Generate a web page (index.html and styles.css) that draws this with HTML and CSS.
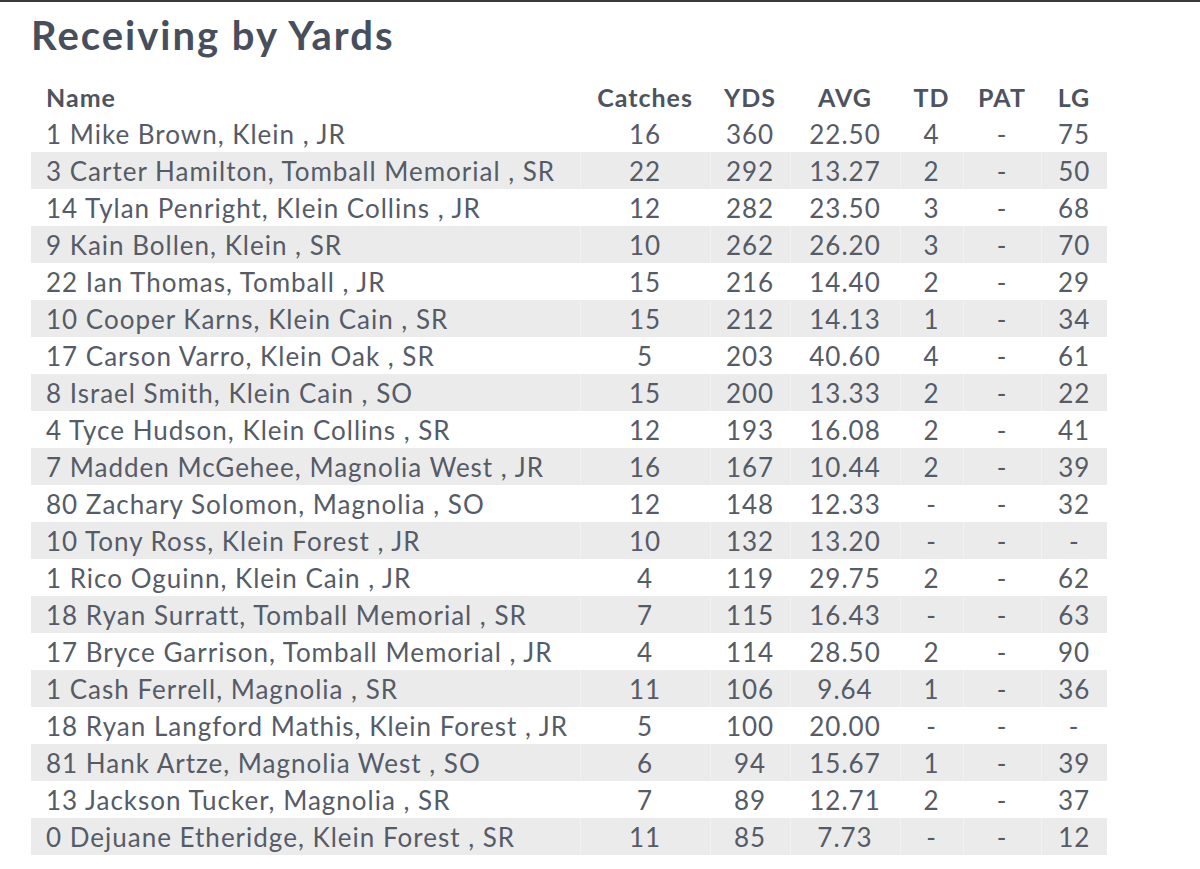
FILE: index.html
```html
<!DOCTYPE html>
<html>
<head>
<meta charset="utf-8">
<link rel="stylesheet" href="styles.css">
</head>
<body>
<div class="page">
  <h1 class="title">Receiving by Yards</h1>
  <table class="stats">
    <colgroup>
      <col class="c-name"><col class="c-catch"><col class="c-yds"><col class="c-avg"><col class="c-td"><col class="c-pat"><col class="c-lg">
    </colgroup>
    <thead>
      <tr><th class="name">Name</th><th>Catches</th><th>YDS</th><th>AVG</th><th>TD</th><th>PAT</th><th>LG</th></tr>
    </thead>
    <tbody>
      <tr><td class="name">1 Mike Brown, Klein , JR</td><td>16</td><td>360</td><td>22.50</td><td>4</td><td>-</td><td>75</td></tr>
      <tr><td class="name">3 Carter Hamilton, Tomball Memorial , SR</td><td>22</td><td>292</td><td>13.27</td><td>2</td><td>-</td><td>50</td></tr>
      <tr><td class="name">14 Tylan Penright, Klein Collins , JR</td><td>12</td><td>282</td><td>23.50</td><td>3</td><td>-</td><td>68</td></tr>
      <tr><td class="name">9 Kain Bollen, Klein , SR</td><td>10</td><td>262</td><td>26.20</td><td>3</td><td>-</td><td>70</td></tr>
      <tr><td class="name">22 Ian Thomas, Tomball , JR</td><td>15</td><td>216</td><td>14.40</td><td>2</td><td>-</td><td>29</td></tr>
      <tr><td class="name">10 Cooper Karns, Klein Cain , SR</td><td>15</td><td>212</td><td>14.13</td><td>1</td><td>-</td><td>34</td></tr>
      <tr><td class="name">17 Carson Varro, Klein Oak , SR</td><td>5</td><td>203</td><td>40.60</td><td>4</td><td>-</td><td>61</td></tr>
      <tr><td class="name">8 Israel Smith, Klein Cain , SO</td><td>15</td><td>200</td><td>13.33</td><td>2</td><td>-</td><td>22</td></tr>
      <tr><td class="name">4 Tyce Hudson, Klein Collins , SR</td><td>12</td><td>193</td><td>16.08</td><td>2</td><td>-</td><td>41</td></tr>
      <tr><td class="name">7 Madden McGehee, Magnolia West , JR</td><td>16</td><td>167</td><td>10.44</td><td>2</td><td>-</td><td>39</td></tr>
      <tr><td class="name">80 Zachary Solomon, Magnolia , SO</td><td>12</td><td>148</td><td>12.33</td><td>-</td><td>-</td><td>32</td></tr>
      <tr><td class="name">10 Tony Ross, Klein Forest , JR</td><td>10</td><td>132</td><td>13.20</td><td>-</td><td>-</td><td>-</td></tr>
      <tr><td class="name">1 Rico Oguinn, Klein Cain , JR</td><td>4</td><td>119</td><td>29.75</td><td>2</td><td>-</td><td>62</td></tr>
      <tr><td class="name">18 Ryan Surratt, Tomball Memorial , SR</td><td>7</td><td>115</td><td>16.43</td><td>-</td><td>-</td><td>63</td></tr>
      <tr><td class="name">17 Bryce Garrison, Tomball Memorial , JR</td><td>4</td><td>114</td><td>28.50</td><td>2</td><td>-</td><td>90</td></tr>
      <tr><td class="name">1 Cash Ferrell, Magnolia , SR</td><td>11</td><td>106</td><td>9.64</td><td>1</td><td>-</td><td>36</td></tr>
      <tr><td class="name">18 Ryan Langford Mathis, Klein Forest , JR</td><td>5</td><td>100</td><td>20.00</td><td>-</td><td>-</td><td>-</td></tr>
      <tr><td class="name">81 Hank Artze, Magnolia West , SO</td><td>6</td><td>94</td><td>15.67</td><td>1</td><td>-</td><td>39</td></tr>
      <tr><td class="name">13 Jackson Tucker, Magnolia , SR</td><td>7</td><td>89</td><td>12.71</td><td>2</td><td>-</td><td>37</td></tr>
      <tr><td class="name">0 Dejuane Etheridge, Klein Forest , SR</td><td>11</td><td>85</td><td>7.73</td><td>-</td><td>-</td><td>12</td></tr>
    </tbody>
  </table>
</div>
</body>
</html>
```

FILE: styles.css
```css
html, body {
  margin: 0;
  padding: 0;
  background: #ffffff;
}
body {
  font-family: Lato, "Open Sans", sans-serif;
  color: #555b67;
}
.page {
  border-top: 2px solid #3a3a3a;
  padding: 11px 0 0 31px;
}
.title {
  margin: 0;
  font-size: 40px;
  line-height: 44px;
  font-weight: 700;
  letter-spacing: 2px;
  color: #474e5c;
}
.stats {
  margin-top: 22px;
  border-collapse: collapse;
  table-layout: fixed;
  width: 1076px;
}
.c-name { width: 549px; }
.c-catch { width: 130px; }
.c-yds { width: 80px; }
.c-avg { width: 110px; }
.c-td { width: 63px; }
.c-pat { width: 78px; }
.c-lg { width: 66px; }
.stats th, .stats td {
  padding: 0;
  height: 37px;
  text-align: center;
  font-size: 26px;
  letter-spacing: 1px;
  white-space: nowrap;
}
.stats th {
  height: 36px;
  font-weight: 700;
  font-size: 25px;
  color: #4d5361;
}
.stats .name {
  text-align: left;
  padding-left: 15px;
}
.stats tbody tr:nth-child(even) td {
  background: #ebebeb;
}
.stats tbody tr:nth-child(even) td + td {
  border-left: 1px solid #f2f2f2;
}
```
